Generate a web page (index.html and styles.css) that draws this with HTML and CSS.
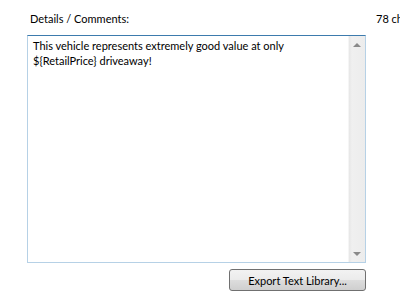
FILE: index.html
```html
<!DOCTYPE html>
<html lang="en">
<head>
    <meta charset="UTF-8">
    <title>Details / Comments</title>
    <link rel="stylesheet" href="styles.css">
</head>
<body>
    <div class="panel">
        <div class="header-row">
            <span class="field-label">Details / Comments:</span>
            <span class="char-count">78 characters</span>
        </div>
        <div class="comment-box">
            <div class="comment-text">This vehicle represents extremely good value at only<br>${RetailPrice} driveaway!</div>
            <div class="scrollbar">
                <span class="arrow arrow-up"></span>
                <span class="arrow arrow-down"></span>
            </div>
        </div>
        <div class="button-row">
            <button class="export-btn">Export Text Library...</button>
        </div>
    </div>
</body>
</html>
```

FILE: styles.css
```css
body {
    margin: 0;
    padding: 0;
    background: #fff;
    font-family: 'Lato', sans-serif;
    font-size: 11px;
    color: #000;
    overflow: hidden;
    width: 400px;
    height: 300px;
}
.panel {
    padding: 11px 0 0 27px;
}
.header-row {
    display: flex;
    width: 373px;
    height: 16px;
    line-height: 16px;
    white-space: nowrap;
    overflow: hidden;
}
.field-label {
    flex: none;
    padding-left: 3px;
    width: 346px;
}
.char-count {
    flex: none;
}
.comment-box {
    margin-top: 8px;
    width: 337px;
    height: 226px;
    display: flex;
    border: 1px solid #b6d1e6;
    border-top-color: #3d7bad;
}
.comment-text {
    flex: 1;
    padding: 2px 5px;
    line-height: 15px;
}
.scrollbar {
    width: 17px;
    background: linear-gradient(to right, #e6e6e6, #f0f0f0 3px, #ececec);
    border-left: 1px solid #f5f5f5;
    display: flex;
    flex-direction: column;
    justify-content: space-between;
    align-items: center;
    padding: 7px 0 6px;
    box-sizing: border-box;
}
.arrow {
    width: 0;
    height: 0;
    border-left: 4px solid transparent;
    border-right: 4px solid transparent;
}
.arrow-up {
    border-bottom: 4px solid #8a8a8a;
}
.arrow-down {
    border-top: 4px solid #8a8a8a;
}
.button-row {
    display: flex;
    justify-content: flex-end;
    width: 339px;
    margin-top: 6px;
}
.export-btn {
    width: 137px;
    height: 22px;
    font-family: 'Lato', sans-serif;
    font-size: 11px;
    color: #000;
    border: 1px solid #707070;
    border-radius: 3px;
    background: linear-gradient(to bottom, #f2f2f2 0%, #ebebeb 50%, #dddddd 51%, #cfcfcf 100%);
    padding: 0;
}
```
